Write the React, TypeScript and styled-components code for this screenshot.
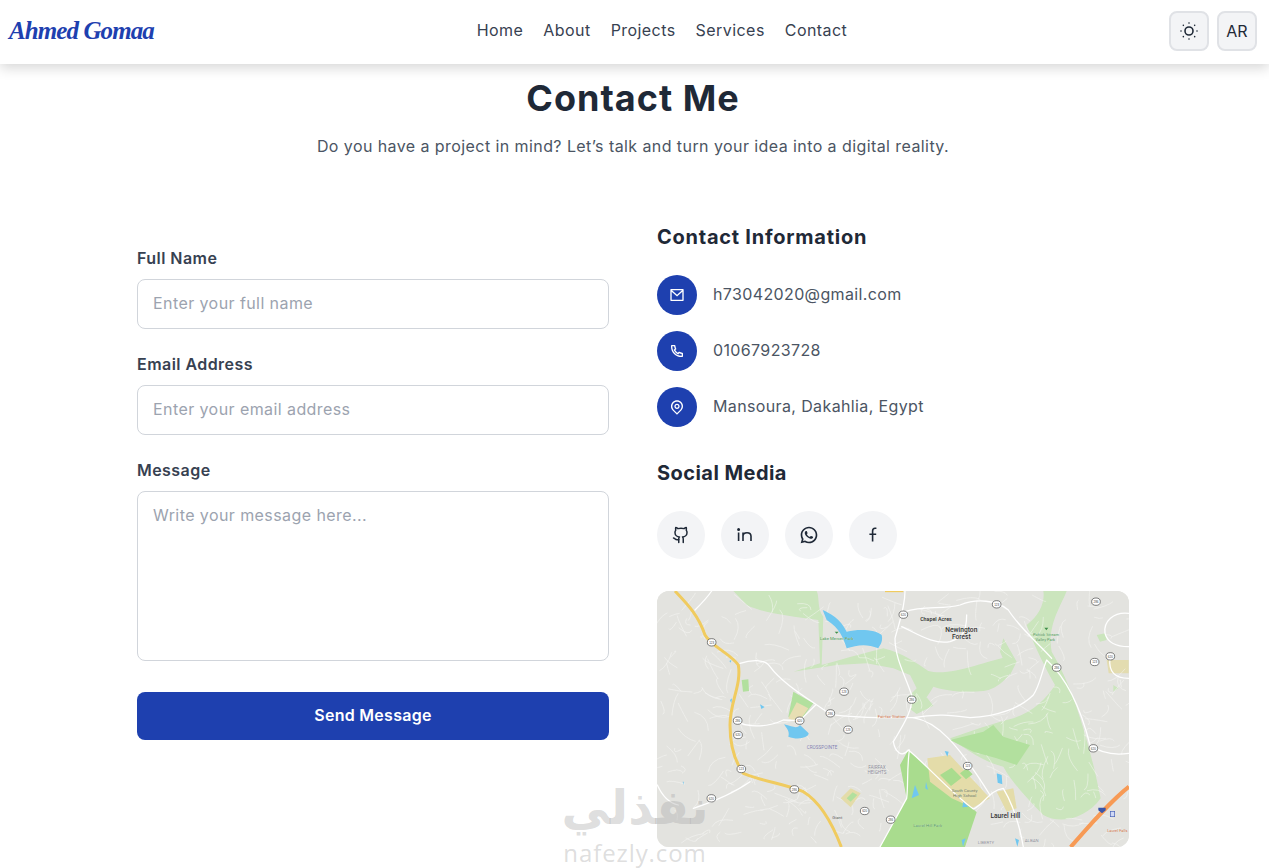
import React from "react";
import styled, { createGlobalStyle } from "styled-components";
import { SunDim, Github } from "lucide-react";
import { RiMailLine, RiPhoneLine, RiMapPinLine, RiWhatsappLine } from "react-icons/ri";

const Global = createGlobalStyle`
  * { box-sizing: border-box; }
  html, body { margin: 0; padding: 0; background: #fff; overflow: hidden; }
  body { font-family: Inter, "Noto Sans", sans-serif; color: #1f2937; }
`;
const Page = styled.div`position: relative; height: 868px; overflow: hidden;`;
const Header = styled.header`
  height: 64px; display: flex; align-items: center; justify-content: space-between;
  padding: 0 12px 2px 9px; background: #fff; box-shadow: 0 4px 12px rgba(0,0,0,.16);
  position: relative; z-index: 2;
`;
const Logo = styled.div`
  width: 146px; white-space: nowrap; color: #1e40af; font: italic 700 25px "Liberation Serif", serif; letter-spacing: -.9px;
`;
const Nav = styled.nav`display: flex; gap: 20px; margin-bottom: 2px;`;
const NavLink = styled.a`font-size: 16px; line-height: 24px; color: #374151; letter-spacing: .44px;`;
const Tools = styled.div`display: flex; gap: 8px;`;
const ToolButton = styled.button`
  width: 40px; height: 40px; padding: 0; display: flex; align-items: center; justify-content: center;
  background: #f3f4f6; border: 2px solid #e0e2e6; border-radius: 8px; color: #1f2937;
  font: 400 16px Inter, sans-serif;
`;
const Main = styled.main`width: 992px; margin-left: 137px; padding-top: 14px;`;
const Title = styled.h1`margin: 0; text-align: center; font-size: 36px; line-height: 40px; font-weight: 700; color: #1f2937; letter-spacing: 1px;`;
const Subtitle = styled.p`margin: 16px 0 65px; text-align: center; font-size: 16px; line-height: 24px; color: #4b5563; letter-spacing: .42px;`;
const Columns = styled.div`display: grid; grid-template-columns: 472px 472px; gap: 48px;`;
const Form = styled.div`padding-top: 25px; display: flex; flex-direction: column;`;
const Label = styled.label`display: block; font-size: 16px; line-height: 20px; font-weight: 600; color: #374151; margin-bottom: 11px; letter-spacing: .45px;`;
const Field = styled.div<{ $h: number }>`
  height: ${(p) => p.$h}px; margin-bottom: 25px; border: 1px solid #d1d5db; border-radius: 8px; padding: 0 15px;
  display: flex; align-items: ${(p) => (p.$h > 60 ? "flex-start" : "center")};
  padding-top: ${(p) => (p.$h > 60 ? "11px" : "0")};
  padding-bottom: ${(p) => (p.$h > 60 ? "0" : "2px")};
  font-size: 16px; line-height: 24px; color: #9ca3af; letter-spacing: .42px;
`;
const Submit = styled.button`
  height: 48px; margin-top: 6px; padding: 0 0 2px; border: 0; border-radius: 8px; background: #1e40af; color: #fff;
  font: 600 16px Inter, sans-serif; letter-spacing: .28px;
`;
const Heading = styled.h3<{ $ls: number }>`margin: 0 0 24px; font-size: 20px; line-height: 28px; font-weight: 700; color: #1f2937; letter-spacing: ${(p) => p.$ls}px;`;
const InfoList = styled.div`display: flex; flex-direction: column; gap: 16px; margin-bottom: 32px;`;
const InfoRow = styled.div`display: flex; align-items: center; gap: 16px; font-size: 16px; line-height: 24px; color: #4b5563; letter-spacing: .37px;`;
const InfoText = styled.span`margin-bottom: 2px;`;
const Badge = styled.span`width: 40px; height: 40px; border-radius: 50%; background: #1e40af; color: #fff; display: flex; align-items: center; justify-content: center;`;
const Socials = styled.div`display: flex; gap: 16px; margin-bottom: 32px;`;
const Social = styled.a`width: 48px; height: 48px; border-radius: 50%; background: #f3f4f6; color: #1f2937; display: flex; align-items: center; justify-content: center;`;
const MapFrame = styled.div`height: 256px; border-radius: 12px; overflow: hidden; background: #e3e3df;`;
const MapSvg = styled.svg`display: block; width: 472px; height: 256px;`;
const Watermark = styled.div`
  position: absolute; left: 540px; top: 780px; width: 190px; z-index: 3; pointer-events: none;
  display: flex; flex-direction: column; align-items: center; color: rgba(170,170,170,.4);
`;
const WatermarkArabic = styled.div`font: 700 48px/54px "DejaVu Sans", sans-serif; height: 62px;`;
const WatermarkLatin = styled.div`font: 500 24px/22px "Open Sans", sans-serif; letter-spacing: .9px;`;

function rng(seed: number) {
  let s = seed;
  return () => { s = (s * 16807) % 2147483647; return (s - 1) / 2147483646; };
}
const streets = (() => {
  const r = rng(4711);
  const out: string[] = [];
  for (let i = 0; i < 460; i++) {
    const x = 30 + r() * 1400, y = 25 + r() * 750;
    const a = r() * 6.28, l = 18 + r() * 55;
    const dx = Math.cos(a) * l, dy = Math.sin(a) * l;
    const bx = (r() - .5) * 44, by = (r() - .5) * 44;
    out.push(`M${x.toFixed(0)} ${y.toFixed(0)}q${(dx / 2 + bx).toFixed(0)} ${(dy / 2 + by).toFixed(0)} ${dx.toFixed(0)} ${dy.toFixed(0)}`);
  }
  return out;
})();
const shields: [number, number][] = [[185,172],[263,407],[264,450],[274,552],[433,613],[184,640],[582,320],[541,385],[449,407],[594,434],[785,344],[760,89],[1040,58],[1338,50],[1381,214],[1334,231],[1220,248],[1330,490],[953,543],[722,704],[644,678]];
const labels: { x: number; y: number; t: string; s: number; c: string; w?: number }[] = [
  { x: 858, y: 107, t: "Chapel Acres", s: 16, c: "#333", w: 600 },
  { x: 934, y: 140, t: "Newington", s: 20, c: "#333", w: 500 },
  { x: 934, y: 161, t: "Forest", s: 20, c: "#333", w: 500 },
  { x: 560, y: 165, t: "Lake Mercer Park", s: 13, c: "#3f8f4a" },
  { x: 1188, y: 153, t: "Pohick Stream", s: 12, c: "#3f8f4a" },
  { x: 1186, y: 167, t: "Valley Park", s: 12, c: "#3f8f4a" },
  { x: 516, y: 493, t: "CROSSPOINTE", s: 14, c: "#7a7aa8" },
  { x: 681, y: 552, t: "FAIRFAX", s: 14, c: "#8a8a94" },
  { x: 681, y: 568, t: "HEIGHTS", s: 14, c: "#8a8a94" },
  { x: 725, y: 399, t: "Fairfax Station", s: 13, c: "#c96a3c" },
  { x: 944, y: 620, t: "South County", s: 13, c: "#5d6b3a" },
  { x: 944, y: 636, t: "High School", s: 13, c: "#5d6b3a" },
  { x: 833, y: 725, t: "Laurel Hill Park", s: 13, c: "#3f8f4a" },
  { x: 1066, y: 700, t: "Laurel Hill", s: 20, c: "#333", w: 500 },
  { x: 562, y: 703, t: "Giant", s: 13, c: "#555" },
  { x: 1402, y: 741, t: "Laurel Falls", s: 12, c: "#c96a3c" },
  { x: 1008, y: 778, t: "LIBERTY", s: 13, c: "#8a8a94" },
  { x: 1145, y: 770, t: "ALBAN", s: 13, c: "#8a8a94" },
];

function LinkedInMark() {
  return (
    <svg width="20" height="20" viewBox="0 0 20 20" fill="none" stroke="currentColor" strokeWidth="1.6">
      <path d="M3.6 7.6V16M8 16V7.6M8 11.2c0-4.6 8-4.6 8 0V16" />
      <circle cx="3.6" cy="4.4" r=".7" fill="currentColor" />
    </svg>
  );
}
function FacebookMark() {
  return (
    <svg width="20" height="20" viewBox="0 0 20 20" fill="none" stroke="currentColor" strokeWidth="1.6">
      <path d="M13.4 3.2h-1.4C10 3.2 9.6 4.5 9.6 6v10.6M6.4 9.2h6.8" />
    </svg>
  );
}
function MapArt() {
  return (
    <MapSvg viewBox="21 18 1416 768" aria-label="Map">
      <defs><filter id="soft"><feGaussianBlur stdDeviation="1.6" /></filter></defs>
      <rect x="21" y="18" width="1416" height="768" fill="#e3e3df" />
      <g filter="url(#soft)">
        <g fill="#cbe5bd">
          <path d="M250 18H500C510 40 500 70 520 95L515 240C570 225 640 205 700 190C760 205 800 235 835 258C900 275 1000 230 1085 212C1110 240 1060 310 1000 318C940 325 880 315 850 305C830 340 810 365 790 372L770 340L800 310L780 270L730 250L650 235L560 240L430 260L510 235L505 105C430 95 340 85 290 60Z" />
          <path d="M1180 18H1250C1235 60 1190 120 1205 200C1265 300 1300 420 1335 560L1352 640C1310 700 1230 720 1180 690C1130 640 1085 590 1060 545C1000 530 960 500 900 460C960 440 1030 415 1090 400C1150 380 1190 340 1215 300C1170 220 1140 150 1130 120C1170 90 1185 50 1180 18Z" />
          <path d="M1060 160l40 70-20 40-30-70zM1340 150l25-5 5 20-20 5zM1390 300l15 10-15 10z" />
          <path d="M780 372l50-35 20 25-50 25z" />
        </g>
        <path d="M1370 225h66v40h-60z" fill="#e3dcb0" />
        <g fill="none" stroke="#f8f8f6" strokeWidth="1.8" strokeLinecap="round" opacity=".8">
          {streets.map((d, i) => <path key={i} d={d} />)}
        </g>
        <path d="M775 495L980 682 945 786H690L770 640 750 540Z" fill="#a9dc8e" />
        <path d="M1030 420L1060 455 1140 480 1100 540 1040 520 970 500 900 465 1000 440Z" fill="#b2e09e" />
        <path d="M430 320l60 35-45 60-30-20zM275 285l20-2 2 35-18 2z" fill="#b2e09e" />
        <path d="M440 352l35 18-32 45-28-15z" fill="#e7deb3" />
        <path d="M832 520L900 510 1020 640 968 668 905 640 840 590Z" fill="#e4dca9" />
        <path d="M870 570l35-22 30 30-32 25zM930 565l20-15 18 18-20 15z" fill="#a9dc8e" />
        <path d="M1040 620l50-10 10 60-30 10z" fill="#e4dca9" />
        <path d="M572 640l30-30 30 15-30 42z" fill="#e4dca9" />
        <path d="M590 640l18-18 14 8-20 20z" fill="#b2e09e" />
        <g fill="#70c7f0">
          <path d="M518 75C540 85 570 100 590 140C630 130 680 135 695 150C700 170 690 180 685 190C650 175 620 180 590 190C580 160 570 130 530 105Z" />
          <path d="M402 418C430 425 440 432 450 420L476 445C475 460 440 465 415 455C420 440 410 430 402 418Z" />
          <path d="M795 600l12 30-22 10zM828 590l6 25-8-5zM1040 565l15 5 2 28-14-5zM884 498l12 2-4 15zM940 650l15 15-18 2zM330 358l14 8-10 6zM238 228l6-3-2 8zM1095 760l12 5-5 20zM935 765l12-5-8 25zM240 345l6-5-2 15zM98 590l3 0 0 10z" />
        </g>
        <g fill="none" stroke="#fff" strokeWidth="3.8" strokeLinecap="round" strokeLinejoin="round">
          <path d="M765 18C765 70 745 120 735 160C735 220 765 270 785 330C790 375 760 420 730 470C735 500 755 520 775 495C830 540 900 620 970 672C1000 660 1020 615 1060 610C1090 660 1110 730 1120 786" />
          <path d="M270 235C300 225 345 220 360 245C400 300 490 350 540 388C620 400 700 398 790 398C860 410 920 470 1020 630" />
          <path d="M790 398C860 385 900 390 960 398C1040 395 1110 370 1150 330C1170 300 1175 260 1190 225C1250 280 1290 360 1320 480C1360 510 1400 510 1436 505" />
          <path d="M765 80C820 60 880 75 930 60C980 40 1040 45 1075 75C1110 130 1170 180 1205 220" />
          <path d="M755 125C800 145 850 180 900 170C930 160 950 150 950 90" />
          <path d="M260 410C300 430 360 425 400 405L449 407L497 360" />
          <path d="M778 495C770 560 775 600 770 640L690 786" />
          <path d="M1436 85C1390 80 1360 110 1365 145C1375 180 1410 185 1436 185M1380 220C1375 260 1395 280 1436 280" />
          <path d="M300 590C250 625 190 650 130 670M22 600C40 640 60 655 85 660" />
          <path d="M185 18C170 40 150 60 135 75" />
        </g>
        <path d="M75 18C110 55 145 90 165 150C185 185 240 205 265 240C275 300 240 350 240 420C240 480 255 530 280 565C340 590 400 595 460 620C510 650 545 710 574 786" fill="none" stroke="#f0cb5f" strokeWidth="9" strokeLinejoin="round" />
        <path d="M705 18h55" stroke="#f0cb5f" strokeWidth="7" />
        <path d="M1262 786C1320 720 1380 650 1437 605" fill="none" stroke="#f79a55" strokeWidth="12" />
      </g>
      <g>
        <path d="M1345 668h22v8l-11 9-11-9z" fill="#3b55a8" />
        <rect x="1381" y="679" width="13" height="16" fill="#cfd8f5" stroke="#4460b8" strokeWidth="2" />
        <path d="M1183 128h12l-6 8zM554 140h12l-6 6z" fill="#3f8f4a" />
        {shields.map(([x, y], i) => (
          <g key={i}>
            <ellipse cx={x} cy={y} rx="13" ry="11" fill="#fff" stroke="#444" strokeWidth="2" />
            <text x={x} y={y + 3.5} textAnchor="middle" fontSize="9" fontFamily="Liberation Sans, sans-serif" fill="#444">{[123, 286, 620][i % 3]}</text>
          </g>
        ))}
        {labels.map((l, i) => (
          <text key={i} x={l.x} y={l.y} textAnchor="middle" fontSize={l.s} fontWeight={l.w ?? 400} fontFamily="Roboto, sans-serif" fill={l.c} stroke="#fff" strokeWidth=".5" paintOrder="stroke">{l.t}</text>
        ))}
      </g>
    </MapSvg>
  );
}

export default function App() {
  return (
    <Page>
      <Global />
      <Header>
        <Logo>Ahmed Gomaa</Logo>
        <Nav>
          {["Home", "About", "Projects", "Services", "Contact"].map((n) => <NavLink key={n}>{n}</NavLink>)}
        </Nav>
        <Tools>
          <ToolButton aria-label="Theme"><SunDim size={24} strokeWidth={1.6} /></ToolButton>
          <ToolButton>AR</ToolButton>
        </Tools>
      </Header>
      <Main>
        <Title>Contact Me</Title>
        <Subtitle>Do you have a project in mind? Let’s talk and turn your idea into a digital reality.</Subtitle>
        <Columns>
          <Form>
            <Label>Full Name</Label>
            <Field $h={50}>Enter your full name</Field>
            <Label>Email Address</Label>
            <Field $h={50}>Enter your email address</Field>
            <Label>Message</Label>
            <Field $h={170}>Write your message here...</Field>
            <Submit>Send Message</Submit>
          </Form>
          <div>
            <Heading $ls={0.75}>Contact Information</Heading>
            <InfoList>
              <InfoRow><Badge><RiMailLine size={16} /></Badge><InfoText>h73042020@gmail.com</InfoText></InfoRow>
              <InfoRow><Badge><RiPhoneLine size={16} /></Badge><InfoText>01067923728</InfoText></InfoRow>
              <InfoRow><Badge><RiMapPinLine size={16} /></Badge><InfoText>Mansoura, Dakahlia, Egypt</InfoText></InfoRow>
            </InfoList>
            <Heading $ls={0.45}>Social Media</Heading>
            <Socials>
              <Social aria-label="GitHub"><Github size={18} strokeWidth={2} /></Social>
              <Social aria-label="LinkedIn"><LinkedInMark /></Social>
              <Social aria-label="WhatsApp"><RiWhatsappLine size={20} /></Social>
              <Social aria-label="Facebook"><FacebookMark /></Social>
            </Socials>
            <MapFrame><MapArt /></MapFrame>
          </div>
        </Columns>
      </Main>
      <Watermark>
        <WatermarkArabic lang="ar" dir="rtl">نفذلي</WatermarkArabic>
        <WatermarkLatin>nafezly.com</WatermarkLatin>
      </Watermark>
    </Page>
  );
}
